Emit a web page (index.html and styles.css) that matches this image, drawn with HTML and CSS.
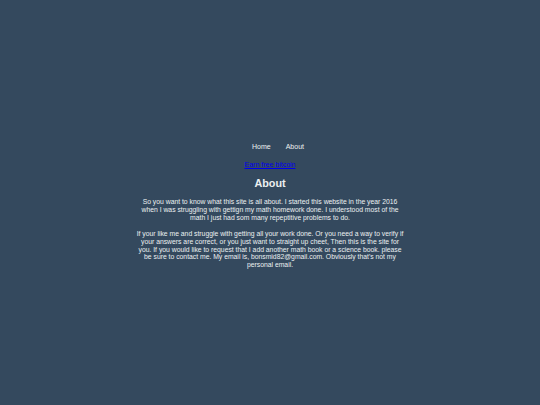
FILE: index.html
```html
<!DOCTYPE html>
<html>
<head>
<meta charset="utf-8">
<link rel="stylesheet" href="styles.css">
</head>
<body>
<div class="page">
  <nav class="nav">
    <a class="nav-link" href="#">Home</a>
    <a class="nav-link" href="#">About</a>
  </nav>
  <a class="promo" href="#">Earn free bitcoin</a>
  <h1 class="title">About</h1>
  <p class="text">So you want to know what this site is all about. I started this website in the year 2016 when I was struggling with gettign my math homework done. I understood most of the math I just had som many repeptitive problems to do.</p>
  <p class="text">If your like me and struggle with getting all your work done. Or you need a way to verify if your answers are correct, or you just want to straight up cheet, Then this is the site for you. If you would like to request that I add another math book or a science book. please be sure to contact me. My email is, bonsmid82@gmail.com. Obviously that's not my personal email.</p>
</div>
</body>
</html>
```
FILE: styles.css
```css
html, body {
  margin: 0;
  padding: 0;
  background: #34495e;
  height: 100%;
}
body {
  font-family: "Liberation Sans", Arial, sans-serif;
  color: #ecf0f1;
}
.page {
  width: 268px;
  margin: 0 auto;
  padding-top: 143px;
  text-align: center;
}
.nav {
  display: flex;
  justify-content: center;
  gap: 15px;
  padding-left: 16px;
  font-size: 7px;
  line-height: 8px;
}
.nav-link {
  color: #ecf0f1;
  text-decoration: none;
}
.promo {
  display: inline-block;
  margin-top: 10px;
  font-size: 7px;
  line-height: 8px;
  color: #0000ee;
  text-decoration: underline;
}
.title {
  margin: 5px 0 8px;
  font-size: 10.8px;
  line-height: 14px;
  font-weight: bold;
}
.text {
  margin: 0 0 8px;
  font-size: 6.8px;
  line-height: 7.9px;
}
```
